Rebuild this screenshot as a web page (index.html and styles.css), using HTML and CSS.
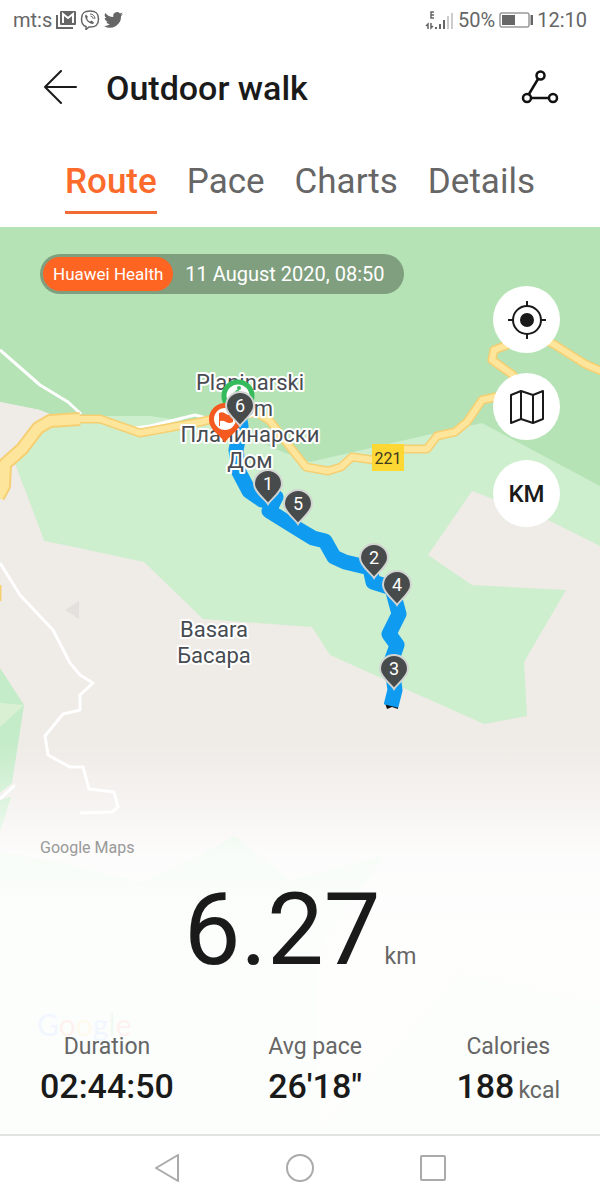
FILE: index.html
```
<!DOCTYPE html>
<html lang="en">
<head>
    <meta charset="UTF-8">
    <meta name="viewport" content="width=device-width, initial-scale=1.0">
    <title>Outdoor walk</title>
    <link rel="stylesheet" href="styles.css">
</head>
<body>

    <!-- Status bar -->
    <div class="status">
        <div class="status-left">
            <span>mt:s</span>
            <svg width="20" height="18" viewBox="0 0 20 18">
                <path d="M1 4v13h16" fill="none" stroke="#666" stroke-width="2"/>
                <path d="M5 0h14q1 0 1 1v12q0 1-1 1H5q-1 0-1-1V1q0-1 1-1z" fill="#666"/>
                <path d="M7 12V3l5 4 5-4v9" fill="none" stroke="#fff" stroke-width="2"/>
            </svg>
            <svg width="20" height="20" viewBox="0 0 20 20" fill="none" stroke="#666">
                <path d="M10 1c6 0 8.500 2 8.500 8s-2.500 8-8.500 8H9l-3 2.500v-3C2.500 15.500 1.500 13 1.500 9 1.500 3 4 1 10 1z" stroke-width="1.500"/>
                <path d="M6 4.500q-1 .5-1 2c1 4 3.500 6.500 7 7.500q1.500 0 2-1.500l-2.500-2-1.500 1c-1.500-.5-2.500-2-3-3.500l1-1z" fill="#666" stroke="none"/>
                <path d="M10 4q4.500 0 5 5M10.500 6q2.500.3 2.800 3"/>
            </svg>
            <svg width="19" height="16" viewBox="0 0 24 20" fill="#666">
                <path d="M24 2.400a10 10 0 0 1-2.800.8A5 5 0 0 0 23.300.5a10 10 0 0 1-3.100 1.200 4.900 4.900 0 0 0-8.400 4.500A14 14 0 0 1 1.700 1a4.900 4.900 0 0 0 1.500 6.600A5 5 0 0 1 1 7a4.900 4.900 0 0 0 3.900 4.900 5 5 0 0 1-2.200.1 4.900 4.900 0 0 0 4.600 3.400A10 10 0 0 1 0 17.500 14 14 0 0 0 21.500 5 10 10 0 0 0 24 2.400z"/>
            </svg>
        </div>
        <div class="status-right">
            <svg width="29" height="20" viewBox="0 0 29 20">
                <path d="M9 2H6v6h3M6 5h3" fill="none" stroke="#666" stroke-width="1.500"/>
                <path d="M3 19v-5L1 16M6 13v5l2-2" fill="none" stroke="#666" stroke-width="1.500"/>
                <path d="M10 17h2v2h-2zM14 14h2v5h-2zM18 10h2v9h-2z" fill="#666"/>
                <path d="M22 6h2v13h-2zM26 3h2v16h-2z" fill="#ccc"/>
            </svg>
            <span>50%</span>
            <svg width="34" height="16" viewBox="0 0 34 16">
                <rect x="1" y="1" width="29" height="14" rx="2" fill="none" stroke="#999" stroke-width="1.500"/>
                <rect x="3" y="3" width="13" height="10" fill="#666"/>
                <path d="M31.500 3H34v10h-2.500z" fill="#666"/>
            </svg>
            <span>12:10</span>
        </div>
    </div>

    <!-- Title bar -->
    <header class="title-bar">
        <button class="icon-btn" aria-label="Back">
            <svg width="36" height="36" viewBox="0 0 36 36" fill="none" stroke="#1a1a1a" stroke-width="2" stroke-linecap="round" stroke-linejoin="round">
                <path d="M19 1L3 17l16 16M3 17h31"/>
            </svg>
        </button>
        <h1>Outdoor walk</h1>
        <button class="icon-btn" aria-label="Share route">
            <svg width="40" height="36" viewBox="0 0 40 36" fill="none" stroke="#111" stroke-width="2.500">
                <path d="M18 9L9 24M11 28h18"/>
                <circle cx="20.500" cy="5.500" r="4"/>
                <circle cx="7" cy="28" r="4"/>
                <circle cx="33" cy="28" r="4"/>
            </svg>
        </button>
    </header>

    <!-- Tabs -->
    <nav class="tabs">
        <a class="tab active" href="#route">Route</a>
        <a class="tab" href="#pace">Pace</a>
        <a class="tab" href="#charts">Charts</a>
        <a class="tab" href="#details">Details</a>
    </nav>

    <main class="route" id="route">
        <!-- Map -->
        <svg class="map" viewBox="0 227 600 907" preserveAspectRatio="xMidYMin slice">
            <defs>
                <g id="pin">
                    <path d="M0 20C-3 15-14 8-14 0a14 14 0 0 1 28 0C14 8 3 15 0 20z" fill="#484b4c" stroke="#d2d4d2" stroke-width="2"/>
                </g>
            </defs>

            <rect y="227" width="600" height="907" fill="#efebe7"/>
            <path d="M0 227H600V486H0z" fill="#b5e3b5"/>
            <path d="M0 402L40 410 60 418 15 463V600H0z" fill="#efebe7"/>
            <path d="M0 486V420L60 416H150L235 428 275 449 310 462 427 435 482 423 600 486V546L548 520 472 491 428 555 472 585 566 590 524 662 527 716 484 724 390 682 330 655 312 627 203 619 144 562 88 550 44 541 15 463z" fill="#cdefce"/>
            <path d="M0 402L40 410 50 425 15 463 44 541 88 550 0 570z" fill="#efebe7"/>
            <path d="M0 668L24 705 12 783 0 793z" fill="#c4ecc8"/>
            <path d="M0 703L24 705 0 727z" fill="#d9f1d2"/>
            <path d="M0 800L11 797 0 832z" fill="#c4ecc8"/>
            <path d="M0 852L60 862 140 882 190 860 235 836 290 880 385 855 330 930 315 960 320 1134H0zM420 1025L460 975 600 1005V1134H320z" fill="#cdefce"/>

            <!-- Roads -->
            <g fill="none" stroke="#fff" stroke-width="3" stroke-linejoin="round">
                <path d="M0 350L40 385 68 402 81 414M135 428L150 426 195 415 218 421"/>
                <path d="M0 563L20 595 53 630 70 663 80 675 93 683 80 695 80 710 63 714 45 736 48 755 70 767 83 767 89 789 114 792 118 807 112 812 80 813M0 799L15 785"/>
            </g>
            <g fill="none" stroke-linejoin="round">
                <path d="M-2 497L4 486 5 464 22 449 38 428 50 421 80 419" stroke="#f6cf72" stroke-width="14"/>
                <path d="M78 419H100L140 433 200 422 235 414 258 413 270 421 290 447 306 467 328 471 341 467 352 457 374 460 390 449 427 449 437 436 455 432 467 422 482 400 500 396 520 396 513 375 492 360 494 350 510 344 530 332 555 345 585 364 606 373" stroke="#f6cf72" stroke-width="9"/>
                <path d="M-2 497L4 486 5 464 22 449 38 428 50 421 80 419" stroke="#fde69c" stroke-width="10"/>
                <path d="M78 419H100L140 433 200 422 235 414 258 413 270 421 290 447 306 467 328 471 341 467 352 457 374 460 390 449 427 449 437 436 455 432 467 422 482 400 500 396 520 396 513 375 492 360 494 350 510 344 530 332 555 345 585 364 606 373" stroke="#fde69c" stroke-width="6"/>
                <path d="M0 585V601" stroke="#f6cf72" stroke-width="3"/>
            </g>
            <path d="M65 610L79 601V619z" fill="#e4e0dd"/>
            <rect x="372" y="444" width="32" height="27" fill="#fdd835"/>
            <text class="road-no" x="388" y="464">221</text>

            <!-- Walked route -->
            <path d="M385 703L387 709 392 707 398 709V703z" fill="#111"/>
            <path d="M239 415L241 426 236 450 239 472 249 491 262 500 276 497 269 511 298 529 313 538 325 541 334 557 345 562 370 568 373 582 392 588 399 614 389 634 397 645 391 662 395 690 391 706" fill="none" stroke="#0f9cf0" stroke-width="15" stroke-linejoin="round"/>

            <!-- Places -->
            <g class="place">
                <text x="250" y="390">Planinarski</text>
                <text x="250" y="416">Dom</text>
                <text x="250" y="442">Планинарски</text>
                <text x="250" y="468">Дом</text>
                <text x="214" y="637">Basara</text>
                <text x="214" y="663">Басара</text>
            </g>

            <!-- Start and finish -->
            <circle cx="238" cy="396" r="14" fill="#fff" stroke="#35bb5c" stroke-width="5"/>
            <circle cx="239" cy="388" r="2" fill="#35bb5c"/>
            <path d="M238 390L237 396M234 394L237 391 241 394" fill="none" stroke="#35bb5c" stroke-width="2"/>
            <path d="M225 443C221 435 209 431 209 419a16 16 0 0 1 32 0C241 431 229 435 225 443z" fill="#f4591f"/>
            <circle cx="225" cy="419" r="11" fill="#fff"/>
            <path d="M219 426V413Q223 411 226 414 229 416 233 414V422Q229 424 226 422 223 420 220 421V426z" fill="#f4591f"/>

            <!-- Kilometre pins -->
            <g class="pin">
                <g transform="translate(240 406)"><use href="#pin"/><text y="6">6</text></g>
                <g transform="translate(268 484)"><use href="#pin"/><text y="6">1</text></g>
                <g transform="translate(298 504)"><use href="#pin"/><text y="6">5</text></g>
                <g transform="translate(374 558)"><use href="#pin"/><text y="6">2</text></g>
                <g transform="translate(397 585)"><use href="#pin"/><text y="6">4</text></g>
                <g transform="translate(394 669)"><use href="#pin"/><text y="6">3</text></g>
            </g>

            <text class="logo" x="37" y="1036"><tspan fill="#4285f4">G</tspan><tspan fill="#ea4335">o</tspan><tspan fill="#fbbc05">o</tspan><tspan fill="#4285f4">g</tspan><tspan fill="#34a853">l</tspan><tspan fill="#ea4335">e</tspan></text>
        </svg>

        <div class="overlay">
            <div class="map-top">
                <div class="source">
                    <span class="source-tag">Huawei Health</span>
                    <time datetime="2020-08-11T08:50">11 August 2020, 08:50</time>
                </div>
                <div class="map-buttons">
                    <button class="round-btn" aria-label="My location">
                        <svg width="38" height="38" viewBox="0 0 38 38" fill="none" stroke="#1a1a1a" stroke-width="2">
                            <circle cx="19" cy="19" r="14"/>
                            <circle cx="19" cy="19" r="6" fill="#1a1a1a"/>
                            <path d="M19 0v6M19 32v6M0 19h6M32 19h6"/>
                        </svg>
                    </button>
                    <button class="round-btn" aria-label="Map type">
                        <svg width="36" height="36" viewBox="0 0 36 36" fill="none" stroke="#1a1a1a" stroke-width="2" stroke-linejoin="round">
                            <path d="M2 6l10-4 12 4 10-4v28l-10 4-12-4-10 4zM12 2v28M24 6v28"/>
                        </svg>
                    </button>
                    <button class="round-btn">KM</button>
                </div>
            </div>

            <div class="summary">
                <p class="provider">Google Maps</p>
                <p class="distance"><span class="distance-value">6.27</span> <span class="unit">km</span></p>
                <dl class="stats">
                    <div class="stat">
                        <dt>Duration</dt>
                        <dd>02:44:50</dd>
                    </div>
                    <div class="stat">
                        <dt>Avg pace</dt>
                        <dd>26'18"</dd>
                    </div>
                    <div class="stat">
                        <dt>Calories</dt>
                        <dd>188<span class="unit">kcal</span></dd>
                    </div>
                </dl>
            </div>
        </div>
    </main>

    <!-- System navigation -->
    <footer class="system-nav">
        <button class="icon-btn" aria-label="Back">
            <svg width="28" height="28" viewBox="0 0 28 28" fill="none" stroke="#aaa" stroke-width="2" stroke-linejoin="round">
                <path d="M25 1v26L3 14z"/>
            </svg>
        </button>
        <button class="icon-btn" aria-label="Home">
            <svg width="28" height="28" viewBox="0 0 28 28" fill="none" stroke="#aaa" stroke-width="2">
                <circle cx="14" cy="14" r="13"/>
            </svg>
        </button>
        <button class="icon-btn" aria-label="Recent apps">
            <svg width="28" height="28" viewBox="0 0 28 28" fill="none" stroke="#aaa" stroke-width="2">
                <rect x="2" y="2" width="24" height="24" rx="1"/>
            </svg>
        </button>
    </footer>

</body>
</html>
```
FILE: styles.css
```
* {
    box-sizing: border-box;
}
body {
    display: flex;
    flex-direction: column;
    min-height: 100vh;
    margin: 0;
    font-family: Roboto, "Liberation Sans", sans-serif;
    color: #1a1a1a;
    background-color: #fff;
}
button {
    padding: 0;
    border: none;
    font-family: inherit;
    color: inherit;
    cursor: pointer;
}
svg {
    display: block;
}
.icon-btn {
    background: none;
}

/* Status bar */
.status {
    display: flex;
    justify-content: space-between;
    height: 40px;
    padding: 0 13px;
    font-size: 20px;
    color: #666;
}
.status-left, .status-right {
    display: flex;
    align-items: center;
    gap: 4px;
}

/* Title bar */
.title-bar {
    display: flex;
    align-items: center;
    height: 96px;
    padding: 0 40px 0 42px;
}
h1 {
    flex: 1;
    margin: 0 0 0 28px;
    font-size: 34px;
    font-weight: 500;
}

/* Tabs */
.tabs {
    display: flex;
    justify-content: space-between;
    height: 91px;
    padding: 23px 65px 13px;
}
.tab {
    padding-bottom: 6px;
    border-bottom: 3px solid transparent;
    font-size: 35px;
    line-height: 46px;
    color: #666;
    text-decoration: none;
}
.tab.active {
    border-color: #f26b35;
    font-weight: 500;
    color: #fc6a2c;
}

/* Map with everything that lies over it */
.route {
    position: relative;
    display: flex;
    flex: 1;
}
.map {
    position: absolute;
    width: 100%;
    height: 100%;
}
.overlay {
    position: relative;
    display: flex;
    flex: 1;
    flex-direction: column;
    justify-content: space-between;
    padding: 27px 40px 20px;
    background: linear-gradient(rgba(255, 255, 255, 0) 57%, rgba(255, 255, 255, 0.4) 63%, rgba(255, 255, 255, 0.85) 69%, rgba(255, 255, 255, 0.93) 76%);
}
.place text {
    font-size: 22px;
    text-anchor: middle;
    fill: #474c52;
    stroke: #fff;
    stroke-width: 4px;
    stroke-linejoin: round;
    paint-order: stroke;
}
.pin text {
    font-size: 18px;
    text-anchor: middle;
    fill: #fff;
}
.road-no {
    font-size: 16px;
    text-anchor: middle;
    fill: #3d3820;
}
.logo {
    font-family: Lato, sans-serif;
    font-size: 30px;
}
.map-top {
    display: flex;
    justify-content: space-between;
    align-items: flex-start;
}
.source {
    display: flex;
    align-items: center;
    gap: 12px;
    height: 40px;
    padding: 0 19px 0 3px;
    border-radius: 20px;
    font-size: 20px;
    color: #fff;
    background-color: #7f9f7f;
}
.source-tag {
    padding: 0 10px;
    border-radius: 17px;
    font-size: 17px;
    line-height: 34px;
    background-color: #fe6522;
}
.map-buttons {
    display: flex;
    flex-direction: column;
    gap: 20px;
    padding-top: 32px;
}
.round-btn {
    display: flex;
    align-items: center;
    justify-content: center;
    width: 67px;
    height: 67px;
    border-radius: 50%;
    font-size: 24px;
    font-weight: 500;
    background-color: #fff;
}

/* Numbers */
.provider {
    margin: 0;
    font-size: 16px;
    line-height: 20px;
    color: #999;
}
.distance {
    margin: 12px 0;
    text-align: center;
    line-height: 120px;
}
.distance-value {
    font-size: 101px;
}
.unit {
    font-size: 23px;
    font-weight: 400;
    color: #666;
}
.stats {
    display: flex;
    justify-content: space-between;
    margin: 0;
}
.stat {
    text-align: center;
}
dt {
    font-size: 23px;
    line-height: 32px;
    color: #666;
}
dd {
    margin: 0;
    font-size: 34px;
    font-weight: 500;
    line-height: 46px;
}
dd .unit {
    margin-left: 4px;
}

/* System navigation */
.system-nav {
    display: flex;
    align-items: center;
    justify-content: center;
    gap: 105px;
    height: 66px;
    border-top: 2px solid #e2e4e2;
}
```
